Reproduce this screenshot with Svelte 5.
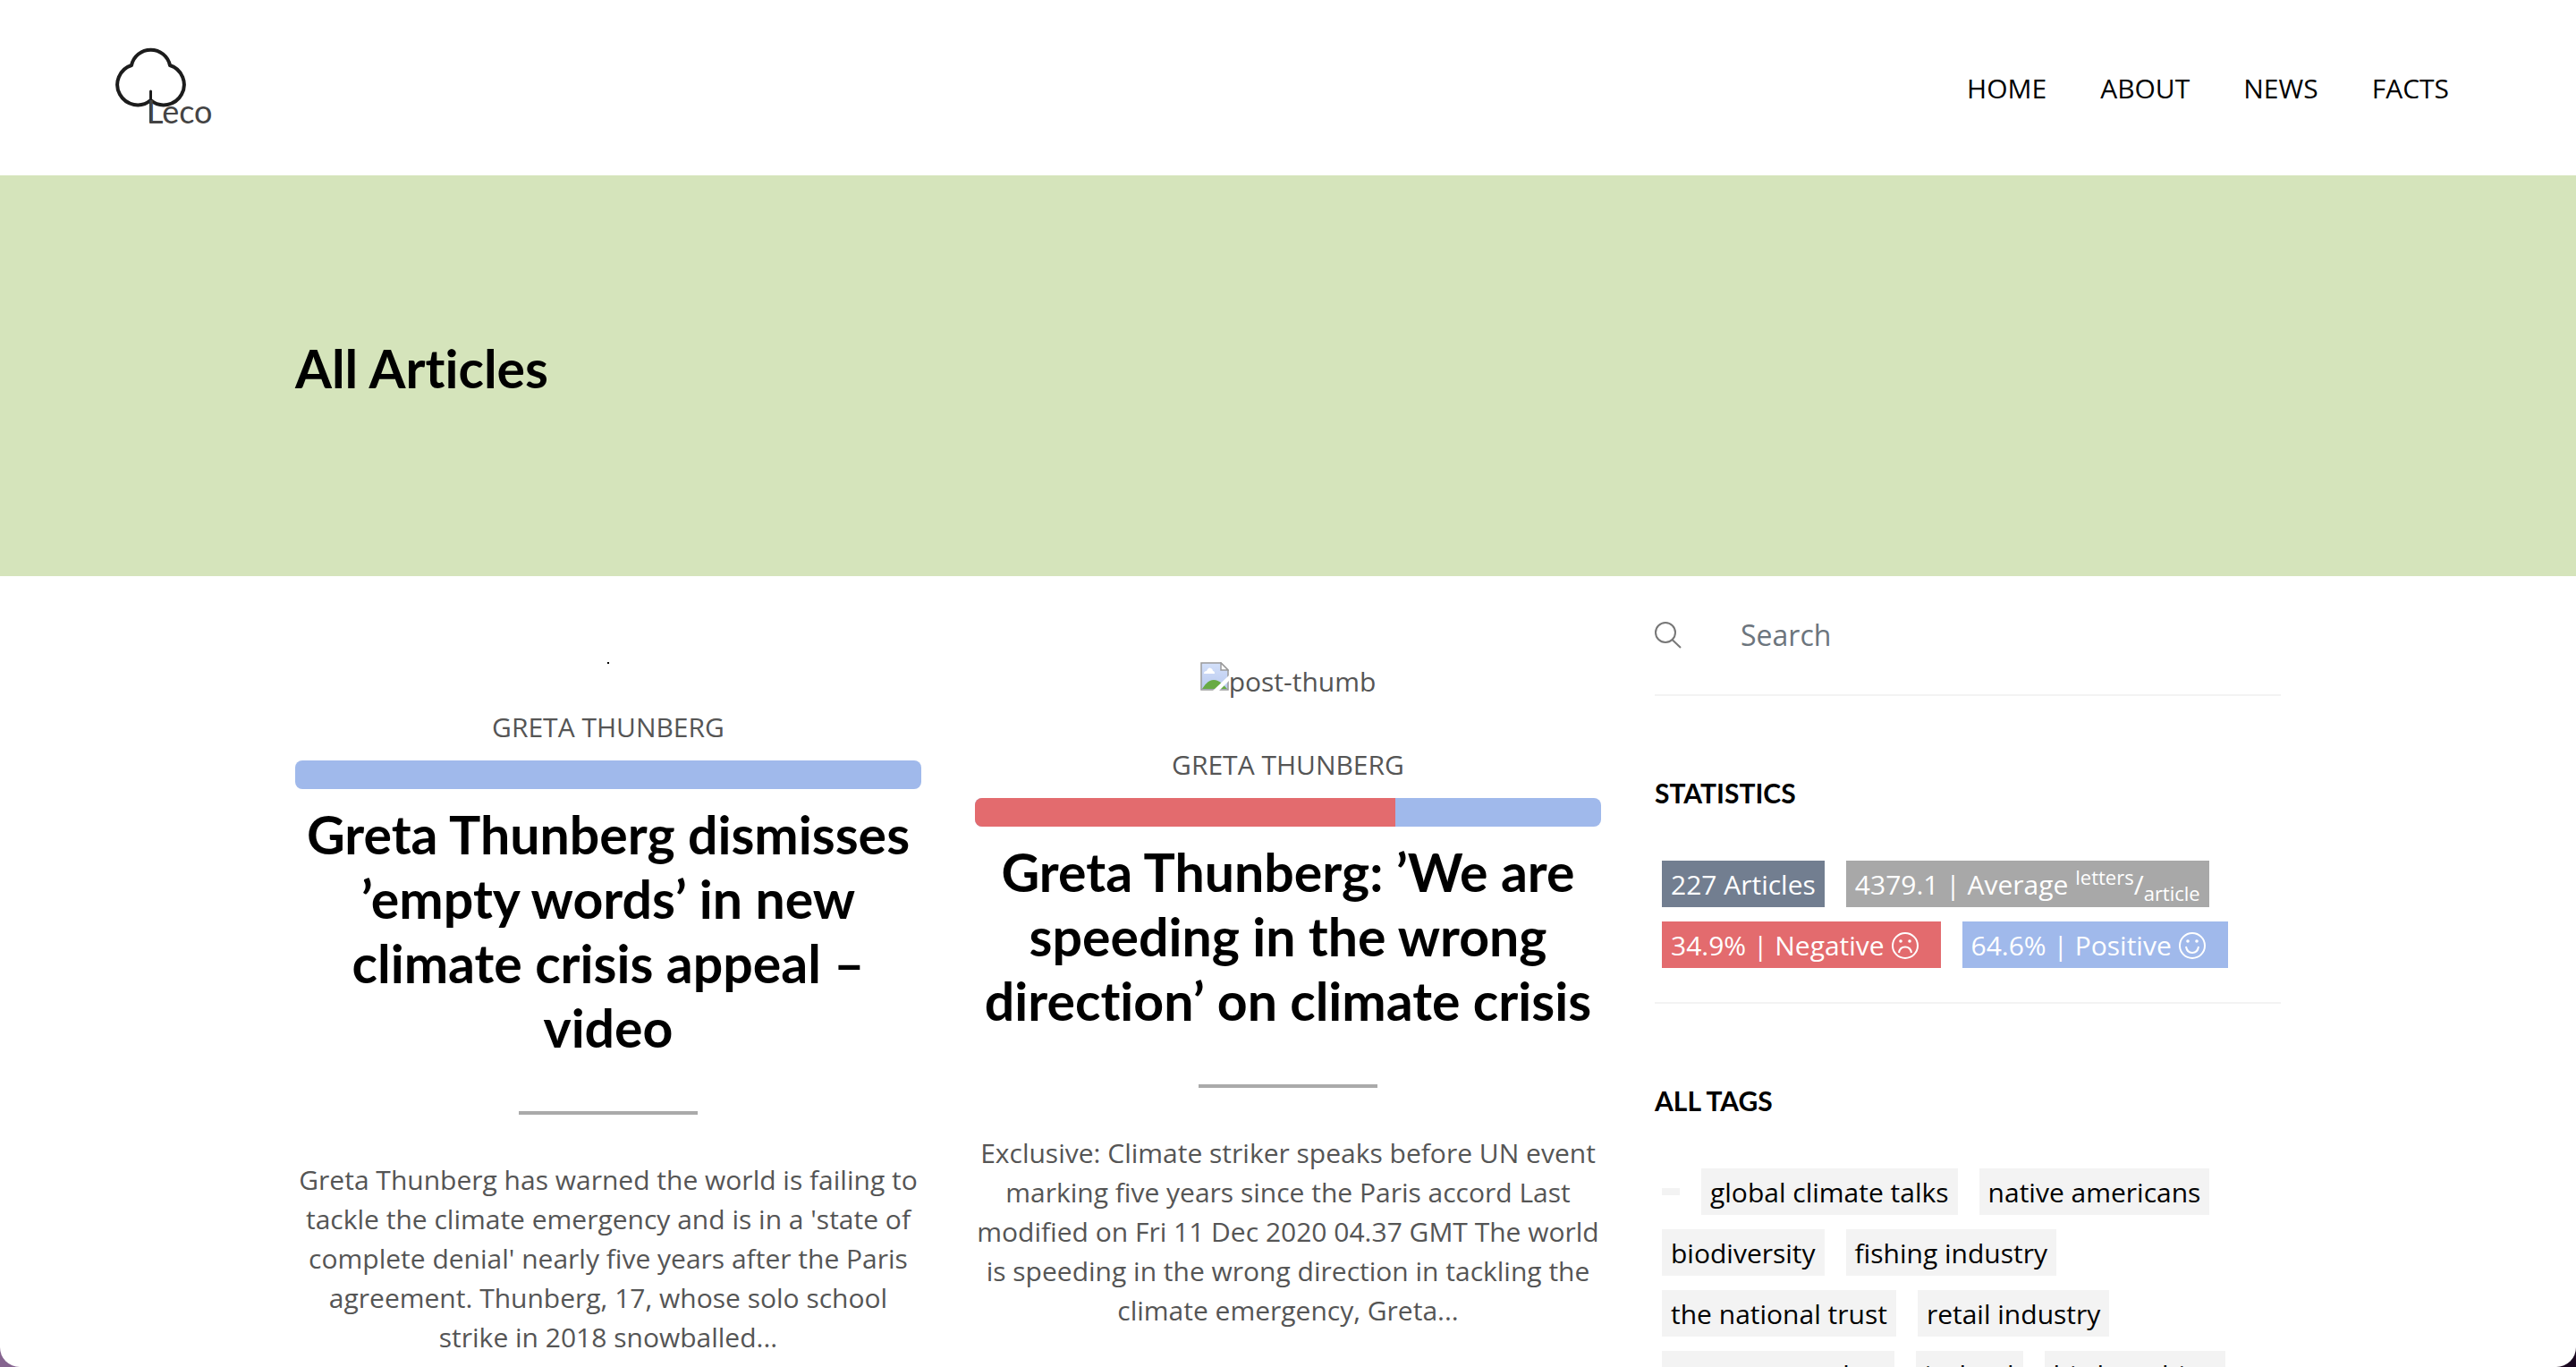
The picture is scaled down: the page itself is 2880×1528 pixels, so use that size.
<script>
  const navigation = ['Home', 'About', 'News', 'Facts'];

  const articles = [
    {
      thumb: 'pixel',
      category: 'Greta Thunberg',
      negative: 0,
      title: 'Greta Thunberg dismisses ’empty words’ in new climate crisis appeal – video',
      excerpt:
        "Greta Thunberg has warned the world is failing to tackle the climate emergency and is in a 'state of complete denial' nearly five years after the Paris agreement. Thunberg, 17, whose solo school strike in 2018 snowballed..."
    },
    {
      thumb: 'missing',
      category: 'Greta Thunberg',
      negative: 67.2,
      title: 'Greta Thunberg: ’We are speeding in the wrong direction’ on climate crisis',
      excerpt:
        'Exclusive: Climate striker speaks before UN event marking five years since the Paris accord Last modified on Fri 11 Dec 2020 04.37 GMT The world is speeding in the wrong direction in tackling the climate emergency, Greta...'
    }
  ];

  const tags = [
    '',
    'global climate talks',
    'native americans',
    'biodiversity',
    'fishing industry',
    'the national trust',
    'retail industry',
    'extreme weather',
    'iceland',
    'birdwatching'
  ];

  let query = $state('');
</script>

<div class="window">
  <header>
    <a class="logo" href="#home" aria-label="Leco">
      <svg viewBox="0 0 120 92" width="120" height="92">
        <g fill="none" stroke="#1c1c1c" stroke-width="4" stroke-linecap="round" stroke-linejoin="round">
          <path d="M19 21 A22 22 0 0 1 62 21 A22.7 22.7 0 1 1 40.500 60 A22.7 22.7 0 1 1 19 21 Z" />
          <path d="M40.500 50 V84" stroke-width="3" />
        </g>
        <text x="36" y="86">Leco</text>
      </svg>
    </a>
    <nav>
      {#each navigation as item}
        <a href="#{item.toLowerCase()}">{item}</a>
      {/each}
    </nav>
  </header>

  <section class="banner">
    <div class="container">
      <h1>All Articles</h1>
    </div>
  </section>

  <main class="container columns">
    {#each articles as article}
      <article>
        {#if article.thumb === 'pixel'}
          <div class="pixel"></div>
        {:else}
          <div class="missing">
            <svg viewBox="0 0 32 32" width="32" height="32" aria-hidden="true">
              <defs>
                <linearGradient id="sky" x1="0" y1="0" x2="0" y2="1">
                  <stop offset="0" stop-color="#d3e0fa" />
                  <stop offset="1" stop-color="#b9c9ee" />
                </linearGradient>
              </defs>
              <path d="M1 1 H23 L31 9 V31 H1 Z" fill="url(#sky)" stroke="#9a9a9a" stroke-width="1.5" />
              <path d="M4 13 Q4 10 7 10 Q9 5 12 7 Q14 8 14 10 Q16 10 16 13 Z" fill="#fff" />
              <path d="M2 30 Q8 20 15 20 Q22 20 30 30 Z" fill="#68ab45" />
              <path d="M14 32 L32 15 V21 L21 32 Z" fill="#fff" />
              <path d="M23 1 V9 H31 Z" fill="#fff" stroke="#9a9a9a" stroke-width="1.5" />
            </svg>
            <span>post-thumb</span>
          </div>
        {/if}
        <p class="category">{article.category}</p>
        <div class="mood">
          <div class="share" style="width: {article.negative}%"></div>
        </div>
        <h2>{article.title}</h2>
        <hr class="rule" />
        <p class="excerpt">{article.excerpt}</p>
      </article>
    {/each}

    <aside>
      <form class="search">
        <button type="button" aria-label="Search">
          <svg viewBox="0 0 30 30" width="30" height="30" fill="none" stroke="#777" stroke-width="2">
            <circle cx="12" cy="12" r="11" />
            <path d="M19.5 20 L29 29" />
          </svg>
        </button>
        <input type="text" placeholder="Search" aria-label="Search articles" bind:value={query} />
      </form>

      <section class="statistics">
        <h3>Statistics</h3>
        <div class="chips">
          <span class="chip slate">227 Articles</span>
          <span class="chip grey">4379.1 | Average <sup>letters</sup>/<sub>article</sub></span>
          <span class="chip red">
            34.9% | Negative
            <svg viewBox="0 0 30 30" width="30" height="30" fill="none" stroke="#fff" stroke-width="2">
              <circle cx="15" cy="15" r="14" />
              <path d="M8 23 Q9 16.500 15 16.500 Q21 16.500 22 23" />
              <g fill="#fff" stroke="none"><circle cx="10" cy="10" r="1.800" /><circle cx="20" cy="10" r="1.800" /></g>
            </svg>
          </span>
          <span class="chip blue">
            64.6% | Positive
            <svg viewBox="0 0 30 30" width="30" height="30" fill="none" stroke="#fff" stroke-width="2">
              <circle cx="15" cy="15" r="14" />
              <path d="M8 16 Q9 23 15 23 Q21 23 22 16" />
              <g fill="#fff" stroke="none"><circle cx="10" cy="10" r="1.800" /><circle cx="20" cy="10" r="1.800" /></g>
            </svg>
          </span>
        </div>
      </section>

      <section class="tags">
        <h3>All Tags</h3>
        <div class="chips">
          {#each tags as tag}
            <a class="chip" href="#tags" aria-label={tag || 'untagged'}>{tag}</a>
          {/each}
        </div>
      </section>
    </aside>
  </main>
</div>

<style>
  :global(body) {
    background: linear-gradient(90deg, #85648f 50%, #1a0820 50%);
  }

  .window {
    height: 100vh;
    overflow-y: auto;
    scrollbar-width: none;
    box-sizing: border-box;
    border-radius: 0 0 22px 22px;
    background: #fff;
    color: #555;
    font-family: 'Open Sans', 'Noto Sans', sans-serif;
    font-size: 30px;
    line-height: 44px;
  }

  h1,
  h2,
  h3 {
    margin: 0;
    color: #000;
    font-family: Lato, sans-serif;
    font-weight: 700;
    font-variant-ligatures: none;
  }

  p {
    margin: 0;
  }

  a {
    color: #000;
    text-decoration: none;
  }

  header {
    display: flex;
    align-items: center;
    justify-content: space-between;
    height: 196px;
    padding: 0 112px 0 128px;
  }

  .logo svg {
    display: block;
  }

  .logo text {
    fill: #444;
    font-family: Lato, sans-serif;
    font-size: 36px;
    font-weight: 400;
  }

  nav {
    display: flex;
    padding-top: 2px;
  }

  nav a {
    padding: 0 30px;
    text-transform: uppercase;
  }

  .container {
    box-sizing: border-box;
    max-width: 2280px;
    margin: 0 auto;
    padding: 0 30px;
  }

  .banner {
    padding: 180px 0 196px;
    background: #d5e4bb;
  }

  h1,
  h2 {
    font-size: 59px;
    line-height: 72px;
  }

  .columns {
    display: grid;
    grid-template-columns: repeat(3, minmax(0, 1fr));
    gap: 60px;
  }

  article {
    padding-top: 96px;
    text-align: center;
  }

  .pixel {
    width: 2px;
    height: 2px;
    margin: 0 auto;
    background: #000;
  }

  .missing {
    display: flex;
    justify-content: center;
    align-items: flex-start;
  }

  .category {
    margin-top: 49px;
    text-transform: uppercase;
  }

  .mood {
    height: 32px;
    margin: 15px 0;
    overflow: hidden;
    border-radius: 8px;
    background: #a0b9eb;
  }

  .share {
    height: 100%;
    background: #e36b6e;
  }

  .rule {
    width: 200px;
    height: 4px;
    margin: 57px auto 51px;
    border: 0;
    background: #aaa;
  }

  .search {
    display: flex;
    align-items: center;
    gap: 66px;
    height: 132px;
    border-bottom: 2px solid #f3f3f3;
  }

  .search button {
    padding: 0;
    border: 0;
    background: none;
  }

  .search button svg {
    display: block;
  }

  .search input {
    flex: 1;
    min-width: 0;
    padding: 0;
    border: 0;
    outline: 0;
    background: none;
    color: #555;
    font: inherit;
    font-size: 32px;
  }

  .search input::placeholder {
    color: #6c757d;
    opacity: 1;
  }

  h3 {
    font-size: 30px;
    line-height: 40px;
    text-transform: uppercase;
  }

  .statistics,
  .tags {
    padding-top: 88px;
  }

  .statistics {
    padding-bottom: 38px;
    border-bottom: 2px solid #f3f3f3;
  }

  .chips {
    display: flex;
    flex-wrap: wrap;
    align-items: center;
    gap: 16px 24px;
    padding: 56px 8px 0;
  }

  .chip {
    padding: 5px 10px 3px;
    background: #f3f3f3;
    color: #000;
    white-space: nowrap;
  }

  .slate,
  .grey,
  .red,
  .blue {
    color: #fff;
  }

  .slate {
    background: #727e90;
  }

  .grey {
    background: #a8a8a8;
  }

  .red {
    background: #e36b6e;
  }

  .blue {
    background: #a0b9eb;
  }

  .red,
  .blue {
    padding-right: 25px;
  }

  .chip svg {
    vertical-align: -4px;
  }

  sup,
  sub {
    font-size: 22px;
    line-height: 0;
  }
</style>
